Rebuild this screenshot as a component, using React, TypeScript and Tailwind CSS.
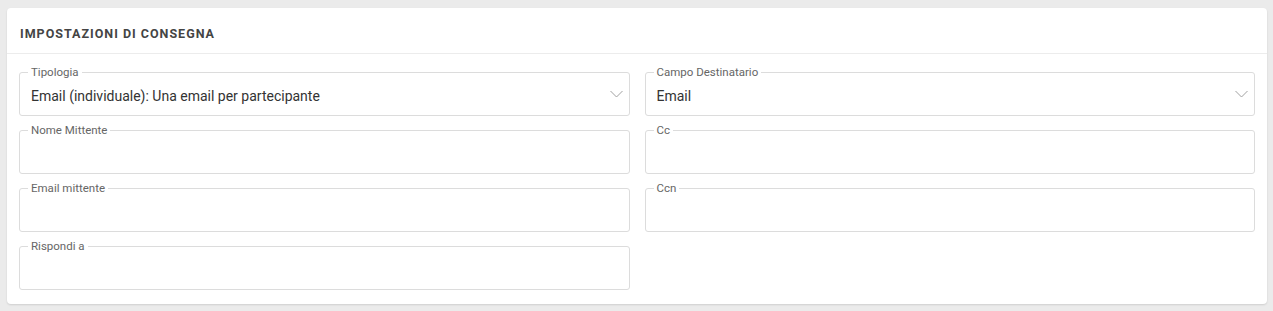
import React from 'react';

const font = { fontFamily: 'Roboto, "Liberation Sans", sans-serif' };

const Field = ({ label, value, select }: { label: string; value?: string; select?: boolean }) => (
  <div className="relative h-[44px] rounded-[3px] border border-[#dcdcdc] bg-white">
    <span className="absolute -top-[7px] left-[8px] bg-white px-[3px] text-[11.5px] leading-[13px] text-[#666]">
      {label}
    </span>
    {value && (
      <div className="pl-[11px] pt-[14px] text-[14px] leading-[18px] text-[#333]">{value}</div>
    )}
    {select && (
      <svg
        className="absolute right-[6px] top-[17px]"
        width="13"
        height="8"
        viewBox="0 0 13 8"
        fill="none"
        stroke="#a0a0a0"
        strokeWidth="1"
      >
        <path d="M0.5 1 L6.5 7 L12.5 1" />
      </svg>
    )}
  </div>
);

export default function App() {
  return (
    <div className="min-h-[311px] bg-[#ebebeb] pt-[8px] pl-[7px] pr-[6px] pb-[7px]" style={font}>
      <div className="rounded-[4px] bg-white shadow-[0_1px_2px_rgba(0,0,0,0.12)]">
        <div className="h-[46px] border-b border-[#ececec] pl-[13px] pt-[18px]">
          <h2 className="text-[12.5px] font-bold leading-[15px] tracking-[1px] text-[#444]">
            IMPOSTAZIONI DI CONSEGNA
          </h2>
        </div>
        <div className="grid grid-cols-2 gap-x-[15px] gap-y-[14px] px-[12px] pt-[18px] pb-[14px]">
          <Field label="Tipologia" value="Email (individuale): Una email per partecipante" select />
          <Field label="Campo Destinatario" value="Email" select />
          <Field label="Nome Mittente" />
          <Field label="Cc" />
          <Field label="Email mittente" />
          <Field label="Ccn" />
          <Field label="Rispondi a" />
        </div>
      </div>
    </div>
  );
}
